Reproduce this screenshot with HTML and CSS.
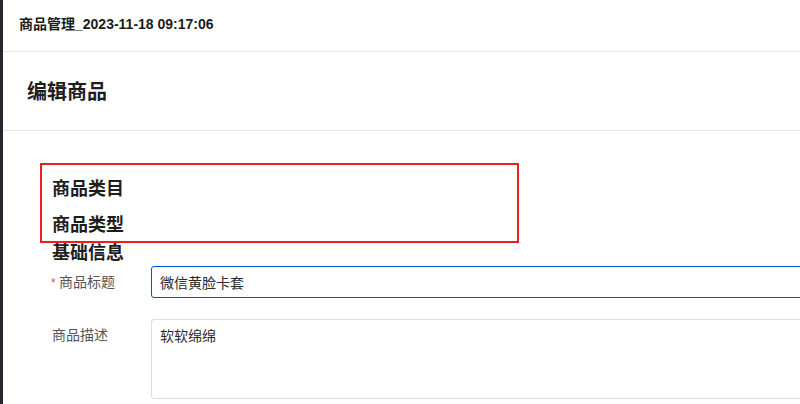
FILE: index.html
```html
<!DOCTYPE html>
<html>

<head>
    <meta charset="UTF-8">
    <title>商品管理</title>
    <link rel="stylesheet" href="styles.css">
</head>

<body>
    <div class="page">
        <div class="topbar">商品管理_2023-11-18 09:17:06</div>

        <div class="page-head">
            <h1>编辑商品</h1>
        </div>

        <div class="content">
            <div class="highlight">
                <h2>商品类目</h2>
                <h2>商品类型</h2>
            </div>

            <div class="section">
                <h2 class="section-title">基础信息</h2>

                <div class="form-row">
                    <label class="form-label"><span class="required">*</span>商品标题</label>
                    <div class="form-control">
                        <input class="input focused" type="text" value="微信黄脸卡套">
                    </div>
                </div>

                <div class="form-row">
                    <label class="form-label">商品描述</label>
                    <div class="form-control">
                        <textarea class="textarea">软软绵绵</textarea>
                    </div>
                </div>
            </div>
        </div>
    </div>
</body>

</html>
```

FILE: styles.css
```css
html,
body {
    margin: 0;
    padding: 0;
    height: 100%;
    overflow: hidden;
}

body {
    font-family: "Liberation Sans", "Noto Sans CJK SC", sans-serif;
    background-color: #fff;
    color: #222;
}

.page {
    min-height: 100%;
    border-left: 3px solid #25282d;
    box-sizing: border-box;
    overflow: hidden;
}

.topbar {
    padding: 13px 16px 16px;
    font-size: 14px;
    font-weight: bold;
    line-height: 22px;
    color: #1c1c1c;
    border-bottom: 1px solid #e6e6e6;
}

.page-head {
    padding: 26px 24px 24px;
    border-bottom: 1px solid #e6e6e6;
}

.page-head h1 {
    margin: 0;
    font-size: 20px;
    font-weight: 600;
    line-height: 28px;
    color: #1e1e1e;
}

.content {
    padding: 32px 0 0 37px;
}

/* boxed block above the form */
.highlight {
    width: 455px;
    height: 64px;
    padding: 12px 10px 0;
    border: 2px solid #f01d1d;
    display: flex;
    flex-direction: column;
    gap: 12px;
}

.highlight h2,
.section-title {
    margin: 0;
    font-size: 18px;
    font-weight: bold;
    line-height: 24px;
    color: #1e1e1e;
}

.section {
    padding-left: 12px;
}

.section-title {
    line-height: 20px;
    margin-bottom: 3px;
}

.form-row {
    display: flex;
    margin-bottom: 20px;
}

.form-label {
    width: 99px;
    flex-shrink: 0;
    font-size: 14px;
    line-height: 32px;
    color: #555;
}

.required {
    display: inline-block;
    width: 8px;
    margin-left: -1px;
    color: #e34d59;
    font-size: 12px;
}

.form-control {
    width: 700px;
    flex-shrink: 0;
}

.input,
.textarea {
    display: block;
    width: 100%;
    box-sizing: border-box;
    font-family: inherit;
    font-size: 14px;
    color: #2a2a2a;
    border: 1px solid #dcdcdc;
    border-radius: 3px;
    padding: 0 8px;
    outline: none;
    background: #fff;
}

.input {
    height: 32px;
    line-height: 30px;
}

.input.focused {
    border-color: #0052d9;
}

.textarea {
    height: 80px;
    padding-top: 6px;
    line-height: 20px;
    resize: none;
}
```
